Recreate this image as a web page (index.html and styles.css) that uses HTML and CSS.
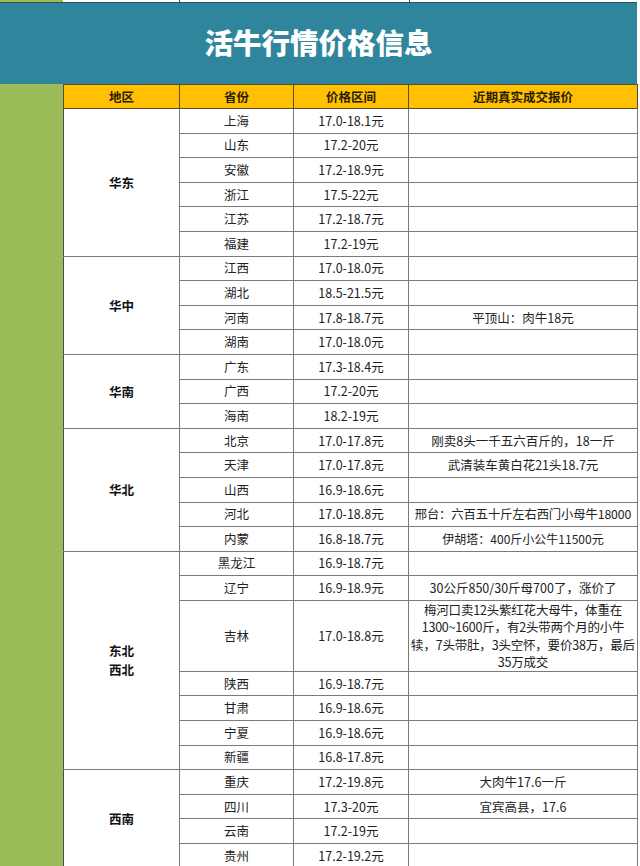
FILE: index.html
```html
<!DOCTYPE html>
<html lang="zh-CN">
<head>
<meta charset="utf-8">
<title>活牛行情价格信息</title>
<link rel="stylesheet" href="styles.css">
</head>
<body>
<div class="page">
  <div class="strip">
    <div class="strip-green"></div>
    <div class="strip-a"></div>
    <div class="strip-b"></div>
    <div class="strip-c"></div>
  </div>
  <div class="banner"><h1 class="title">活牛行情价格信息</h1></div>
  <div class="main">
    <div class="side"></div>
    <table class="grid">
      <colgroup>
        <col class="c1"><col class="c2"><col class="c3"><col class="c4">
      </colgroup>
      <thead>
        <tr class="head"><th>地区</th><th>省份</th><th>价格区间</th><th>近期真实成交报价</th></tr>
      </thead>
      <tbody class="grp">
        <tr><td class="region" rowspan="6">华东</td><td>上海</td><td>17.0-18.1元</td><td></td></tr>
        <tr><td>山东</td><td>17.2-20元</td><td></td></tr>
        <tr><td>安徽</td><td>17.2-18.9元</td><td></td></tr>
        <tr><td>浙江</td><td>17.5-22元</td><td></td></tr>
        <tr><td>江苏</td><td>17.2-18.7元</td><td></td></tr>
        <tr><td>福建</td><td>17.2-19元</td><td></td></tr>
      </tbody>
      <tbody class="grp">
        <tr><td class="region" rowspan="4">华中</td><td>江西</td><td>17.0-18.0元</td><td></td></tr>
        <tr><td>湖北</td><td>18.5-21.5元</td><td></td></tr>
        <tr><td>河南</td><td>17.8-18.7元</td><td>平顶山：肉牛18元</td></tr>
        <tr><td>湖南</td><td>17.0-18.0元</td><td></td></tr>
      </tbody>
      <tbody class="grp">
        <tr><td class="region" rowspan="3">华南</td><td>广东</td><td>17.3-18.4元</td><td></td></tr>
        <tr><td>广西</td><td>17.2-20元</td><td></td></tr>
        <tr><td>海南</td><td>18.2-19元</td><td></td></tr>
      </tbody>
      <tbody class="grp">
        <tr><td class="region" rowspan="5">华北</td><td>北京</td><td>17.0-17.8元</td><td>刚卖8头一千五六百斤的，18一斤</td></tr>
        <tr><td>天津</td><td>17.0-17.8元</td><td>武清装车黄白花21头18.7元</td></tr>
        <tr><td>山西</td><td>16.9-18.6元</td><td></td></tr>
        <tr><td>河北</td><td>17.0-18.8元</td><td class="tight">邢台：六百五十斤左右西门小母牛18000</td></tr>
        <tr><td>内蒙</td><td>16.8-18.7元</td><td class="small">伊胡塔：400斤小公牛11500元</td></tr>
      </tbody>
      <tbody class="grp">
        <tr><td class="region" rowspan="7">东北<br>西北</td><td>黑龙江</td><td>16.9-18.7元</td><td></td></tr>
        <tr><td>辽宁</td><td>16.9-18.9元</td><td>30公斤850/30斤母700了，涨价了</td></tr>
        <tr class="tall"><td>吉林</td><td>17.0-18.8元</td><td class="multi">梅河口卖12头紫红花大母牛，体重在<br>1300~1600斤，有2头带两个月的小牛<br>犊，7头带肚，3头空怀，要价38万，最后<br>35万成交</td></tr>
        <tr><td>陕西</td><td>16.9-18.7元</td><td></td></tr>
        <tr><td>甘肃</td><td>16.9-18.6元</td><td></td></tr>
        <tr><td>宁夏</td><td>16.9-18.6元</td><td></td></tr>
        <tr><td>新疆</td><td>16.8-17.8元</td><td></td></tr>
      </tbody>
      <tbody class="grp">
        <tr><td class="region" rowspan="4">西南</td><td>重庆</td><td>17.2-19.8元</td><td>大肉牛17.6一斤</td></tr>
        <tr><td>四川</td><td>17.3-20元</td><td>宜宾高县，17.6</td></tr>
        <tr><td>云南</td><td>17.2-19元</td><td></td></tr>
        <tr><td>贵州</td><td>17.2-19.2元</td><td></td></tr>
      </tbody>
    </table>
  </div>
</div>
</body>
</html>
```

FILE: styles.css
```css
* { box-sizing: border-box; }
html, body { margin: 0; padding: 0; background: #ffffff; }
body {
  font-family: "Noto Sans CJK SC", "Noto Sans", sans-serif;
  color: #222222;
}
.page {
  width: 640px;
  height: 866px;
  overflow: hidden;
  background: #ffffff;
}
.strip {
  display: flex;
  height: 2px;
  width: 637px;
}
.strip-green { width: 63px; background: #9bbb59; }
.strip-a { width: 116px; }
.strip-b { width: 230px; border-left: 1px solid #444; }
.strip-c { flex: 1; border-left: 1px solid #444; }
.banner {
  width: 637px;
  height: 82px;
  background: #2f869c;
  border-top: 1px solid #2a4f5a;
  display: flex;
  align-items: center;
  justify-content: center;
}
.title {
  margin: 0;
  padding-bottom: 2px;
  font-size: 28.5px;
  font-weight: 900;
  color: #ffffff;
  letter-spacing: 0;
  line-height: 1;
}
.main {
  display: flex;
  align-items: flex-start;
}
.side {
  width: 63px;
  height: 790px;
  flex: none;
  background: #9bbb59;
}
.grid {
  width: 574px;
  border-collapse: collapse;
  table-layout: fixed;
  font-size: 12.5px;
}
.c1 { width: 116px; }
.c2 { width: 114px; }
.c3 { width: 115px; }
.c4 { width: 229px; }
.grid th, .grid td {
  padding: 0 1px;
  text-align: center;
  vertical-align: middle;
  line-height: 18px;
  white-space: nowrap;
  overflow: hidden;
  border: 1px solid #7a7a7a;
}
.grid tr { height: 24.6px; }
.head { height: 24px !important; }
.grid th {
  background: #ffc000;
  color: #2a1c00;
  font-weight: 700;
  font-size: 12.5px;
  border: 1px solid #5d4c2c;
}
.grp { border-top: 1px solid #4d4d4d; }
.grid td.region {
  font-weight: 700;
  color: #111111;
  font-size: 12.5px;
  line-height: 19px;
  border-left-color: #4d4d4d;
}
.grid tr.tall { height: 69px; }
.grid td.multi {
  line-height: 17.5px;
  padding: 0;
  letter-spacing: -0.2px;
}
.grid td.tight { font-size: 12.3px; letter-spacing: -0.1px; }
.grid td.small { font-size: 12px; }
```
